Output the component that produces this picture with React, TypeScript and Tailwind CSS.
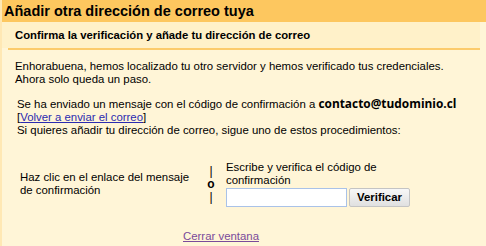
import React from 'react';

const AddEmailDialog: React.FC = () => {
  return (
    <div className="w-[486px] h-[246px] overflow-hidden bg-[#fff5d7] font-['Liberation_Sans',Arial,sans-serif] text-black border-l-2 border-[#ffe8b4]">
      {/* title bar */}
      <div className="h-[22px] bg-[#fdc75f] px-[2px] flex items-center">
        <h1 className="text-[14.5px] font-bold leading-none">Añadir otra dirección de correo tuya</h1>
      </div>

      {/* sub header */}
      <div className="h-[26px] bg-[#fff1c9] pl-[13px] mr-[6px] flex items-center">
        <h2 className="text-[11.3px] font-bold leading-[14px]">Confirma la verificación y añade tu dirección de correo</h2>
      </div>
      <div className="ml-[6px] mr-[6px] h-[2px] bg-[#fccb6b]" />

      <div className="pl-[13px] pr-2 text-[11.4px] leading-[13px]">
        <p className="mt-[10px]">
          Enhorabuena, hemos localizado tu otro servidor y hemos verificado tus credenciales.
          <br />
          Ahora solo queda un paso.
        </p>

        <div className="mt-[11px] pl-[2px] whitespace-nowrap">
          <p>
            Se ha enviado un mensaje con el código de confirmación a{' '}
            <b className="font-['Open_Sans',sans-serif] text-[11.9px]">contacto@tudominio.cl</b>
          </p>
          <p>
            [<a href="#" className="text-[#2b2bb0] underline">Volver a enviar el correo</a>]
          </p>
          <p>Si quieres añadir tu dirección de correo, sigue uno de estos procedimientos:</p>
        </div>

        <div className="mt-[24px] flex items-center">
          <div className="w-[189px] pl-[5px]">
            Haz clic en el enlace del mensaje
            <br />
            de confirmación
          </div>
          <div className="w-[14px] flex flex-col items-center text-[12px] leading-[13px]">
            <span>|</span>
            <span className="font-bold">o</span>
            <span>|</span>
          </div>
          <div className="flex flex-col ml-[8px]">
            <span>Escribe y verifica el código de</span>
            <span>confirmación</span>
            <div className="flex items-center gap-[2px] mt-[1px]">
              <input className="w-[121px] h-[19px] bg-white border border-[#a9c2e8] outline-none" />
              <button className="h-[19px] w-[61px] bg-gradient-to-b from-[#f8f8f8] to-[#e0e0e0] border border-[#c4c4c4] rounded-[2px] text-[11.4px] font-bold">
                Verificar
              </button>
            </div>
          </div>
        </div>

        <div className="mt-[23px] pl-[168px]">
          <a href="#" className="text-[#7a4a9a] underline">Cerrar ventana</a>
        </div>
      </div>
    </div>
  );
};

export default function App() {
  return <AddEmailDialog />;
}
